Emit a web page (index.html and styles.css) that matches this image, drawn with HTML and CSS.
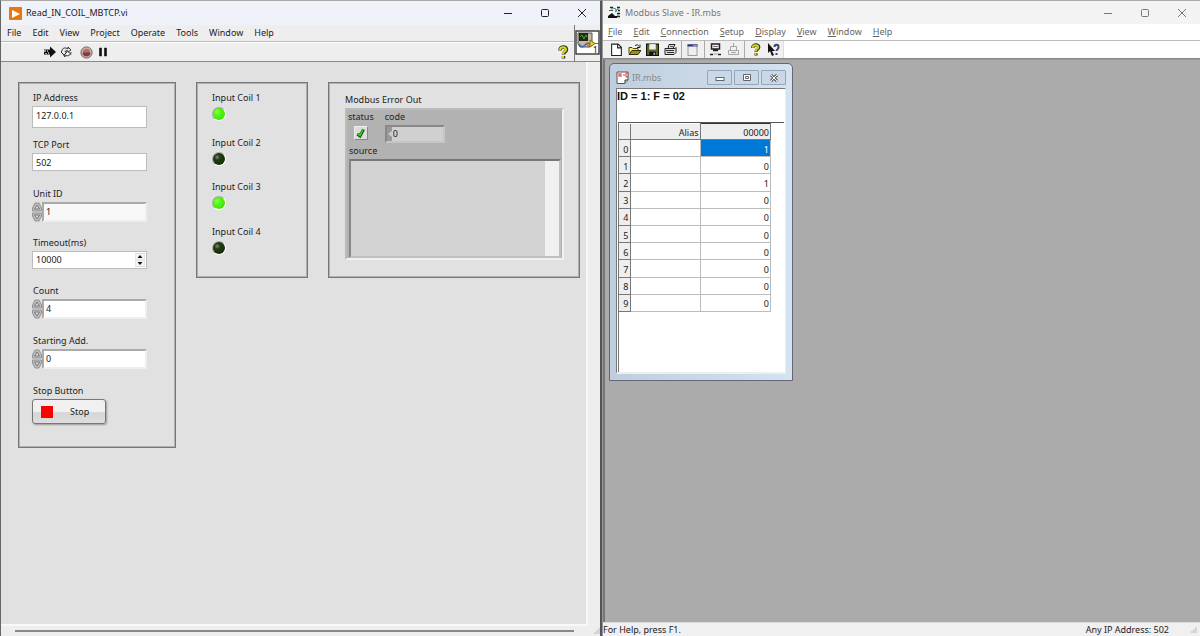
FILE: index.html
```html
<!DOCTYPE html>
<html lang="en">
<head>
<meta charset="utf-8">
<title>Read_IN_COIL_MBTCP.vi</title>
<link rel="stylesheet" href="styles.css">
</head>
<body>
<svg class="defs" aria-hidden="true">
  <symbol id="min" viewBox="0 0 10 10"><path d="M1 5.5h8" stroke="currentColor" fill="none"/></symbol>
  <symbol id="max" viewBox="0 0 10 10"><rect x="1.5" y="1.5" width="7" height="7" rx="1" stroke="currentColor" fill="none"/></symbol>
  <symbol id="close" viewBox="0 0 10 10"><path d="M1 1l8 8M9 1l-8 8" stroke="currentColor" fill="none"/></symbol>
  <symbol id="help" viewBox="0 0 12 14"><path d="M3 5.500C3 1 9.500 1 9.500 4.500C9.500 7 6.500 6.500 6.500 9.500M6.500 11v2.500" stroke="#333" stroke-width="3.500" fill="none"/><path d="M3 5C3 1.500 9 1.500 9 4.500C9 6.500 6 6.500 6 9M6 11v2" stroke="#e0db08" stroke-width="2" fill="none"/></symbol>
  <symbol id="spin" viewBox="0 0 10 20"><path d="M.5 9V6L3 1h4l2.500 5v3zM.5 11h9v3L7 19H3L.5 14z" fill="#bdbdbd" stroke="#929292"/><path d="M2.500 7L5 3l2.500 4zM2.500 13L5 17l2.500-4z" fill="#ddd" stroke="#777"/></symbol>
</svg>

<main class="desktop">
<section class="window vi">
  <header class="titlebar">
    <svg class="app-icon" viewBox="0 0 13 13"><rect width="13" height="13" rx="1" fill="#e8780c"/><path d="M3 3l8 4-8 4z" fill="#fff"/></svg>
    <h1>Read_IN_COIL_MBTCP.vi</h1>
    <div class="controls">
      <button aria-label="Minimize"><svg><use href="#min"/></svg></button>
      <button aria-label="Maximize"><svg><use href="#max"/></svg></button>
      <button aria-label="Close"><svg><use href="#close"/></svg></button>
    </div>
  </header>
  <div class="vi-bars">
    <div class="vi-rows">
      <nav class="menu">
        <a href="#">File</a><a href="#">Edit</a><a href="#">View</a><a href="#">Project</a><a href="#">Operate</a><a href="#">Tools</a><a href="#">Window</a><a href="#">Help</a>
      </nav>
      <div class="vi-tools">
        <button aria-label="Run"><svg viewBox="0 0 13 12"><path d="M1 3.500h6V.5L13 6l-6 5.500v-3H1z" fill="#111"/><path d="M1 4h2v2H1zM4 4h1v2H4zM2 7h2v1H2zM5 6h1v2H5z" fill="#999"/></svg></button>
        <button aria-label="Run continuously"><svg viewBox="0 0 13 12"><path d="M2 5C2 2 5 1 8 3V1l3 3-3 2V5C6 4 5 5 5 6H7L4 9 1 6zM11 6c0 3-3 5-6 3v2L3 8M8 5.500L11 8.500" fill="#eee" stroke="#333"/></svg></button>
        <button class="abort" aria-label="Abort"><svg viewBox="0 0 14 14"><circle cx="7" cy="7" r="6" fill="#c9c3bd" stroke="#655"/><path d="M5 3h4l2 2v4l-2 2H5L3 9V5z" fill="#c46c66"/><path d="M3 7h8v2l-2 2H5L3 9z" fill="#7d3b42"/></svg></button>
        <button aria-label="Pause"><svg viewBox="0 0 12 12"><path d="M2 2h2v8H2zM7 2h2v8H7z" fill="#111" stroke="#111" stroke-width=".6"/></svg></button>
        <button class="vi-help" aria-label="Help"><svg viewBox="0 0 12 14"><use href="#help"/></svg></button>
      </div>
    </div>
    <div class="connector">
      <svg viewBox="0 0 25 25"><rect x="1" y="1" width="23" height="23" fill="#fff" stroke="#444" stroke-width="1.500"/><path d="M3 3h14v11l-2 3H5l-2-3z" fill="#c8b8a8" stroke="#555"/><rect x="4" y="3" width="9" height="8" fill="#182a12"/><path d="M5 7l2-2 2 4 2-4 1 2" stroke="#59a52a" fill="none"/><path d="M4 14q3 5 6 1t7 1" stroke="#3c6ea8" stroke-width="1.500" fill="none"/><path d="M8 17l3-3 4 3" stroke="#d33" fill="none"/><path d="M15 10l5 3.500-5 3.500z" fill="#eddc10" stroke="#776d10"/><path d="M20 13.500h4" stroke="#d33"/><text x="18" y="23" class="icon-number">1</text></svg>
    </div>
  </div>

  <div class="front">
    <form class="panel inputs">
      <div class="field"><label for="ip">IP Address</label><input class="text tall" id="ip" value="127.0.0.1"></div>
      <div class="field"><label for="port">TCP Port</label><input class="text" id="port" value="502"></div>
      <div class="field"><label for="unit">Unit ID</label><div class="numeric"><button type="button" aria-label="Step Unit ID"><svg><use href="#spin"/></svg></button><input class="soft" id="unit" value="1"></div></div>
      <div class="field"><label for="timeout">Timeout(ms)</label><div class="stepper"><input id="timeout" value="10000"><button type="button" aria-label="Step timeout"><svg viewBox="0 0 10 14"><path d="M0 .5h10v13H0zM0 7h10" stroke="#ddd" fill="#f5f5f5"/><path d="M2.500 5L5 2l2.500 3zM2.500 9L5 12l2.500-3z" fill="#111"/></svg></button></div></div>
      <div class="field"><label for="count">Count</label><div class="numeric"><button type="button" aria-label="Step Count"><svg><use href="#spin"/></svg></button><input id="count" value="4"></div></div>
      <div class="field"><label for="start">Starting Add.</label><div class="numeric"><button type="button" aria-label="Step Starting Address"><svg><use href="#spin"/></svg></button><input id="start" value="0"></div></div>
      <div class="field"><label for="stop">Stop Button</label><button class="stop" id="stop" type="button"><span class="square"></span><span class="stop-text">Stop</span></button></div>
    </form>

    <div class="panel coils">
      <div class="coil">Input Coil 1<span class="led on"></span></div>
      <div class="coil">Input Coil 2<span class="led"></span></div>
      <div class="coil">Input Coil 3<span class="led on"></span></div>
      <div class="coil">Input Coil 4<span class="led"></span></div>
    </div>

    <div class="panel errors">
      <h2>Modbus Error Out</h2>
      <div class="cluster">
        <div class="error-top">
          <div class="status">status<span class="check"><svg viewBox="0 0 12 12"><path d="M2.500 7l2.500 2L8.500 2.500" stroke="#164b12" stroke-width="3" fill="none"/><path d="M2.500 6.500L5 8.500l3-6" stroke="#35d82a" stroke-width="1.500" fill="none"/></svg></span></div>
          <div class="code"><label for="code">code</label><div class="code-box"><svg viewBox="0 0 5 14"><path d="M5 4L1 7l4 3z" fill="#ccc"/></svg><input id="code" value="0" readonly></div></div>
        </div>
        <label class="source-label" for="source">source</label>
        <div class="source-box"><textarea id="source" readonly></textarea><div class="strip"></div></div>
      </div>
    </div>
  </div>
  <footer class="vi-foot"><div class="scroll-line"></div><svg viewBox="0 0 6 6"><path d="M5 0v6M3 2v4M1 4v2" stroke="#bbb"/></svg></footer>
</section>

<section class="window slave">
  <header class="titlebar">
    <svg class="app-icon" viewBox="0 0 13 13"><path d="M2 1.500h3M9 1.500h3M10 4.500h2M9 7.500h3M9 10.500h3" stroke="#222" stroke-width="1.500"/><path d="M1 4.500h4M8 3v3" stroke="#555"/><path d="M5 2l3 1M7 6l3-3" stroke="#3c83bd" fill="none"/><path d="M0 12v-2l4-3 3 3h2v2z" fill="#111"/><path d="M9 3h2M9 9h2M3 3h2" stroke="#36ad45"/></svg>
    <h1>Modbus Slave - IR.mbs</h1>
    <div class="controls">
      <button aria-label="Minimize"><svg><use href="#min"/></svg></button>
      <button aria-label="Maximize"><svg><use href="#max"/></svg></button>
      <button aria-label="Close"><svg><use href="#close"/></svg></button>
    </div>
  </header>
  <nav class="menu">
    <a href="#"><u>F</u>ile</a><a href="#"><u>E</u>dit</a><a href="#"><u>C</u>onnection</a><a href="#"><u>S</u>etup</a><a href="#"><u>D</u>isplay</a><a href="#"><u>V</u>iew</a><a href="#"><u>W</u>indow</a><a href="#"><u>H</u>elp</a>
  </nav>
  <div class="slave-tools">
    <div class="tool-group">
      <button aria-label="New"><svg viewBox="0 0 12 12"><path d="M1.500 1h6l3 3v7.500h-9zM7 1v3.500h3" fill="#fff" stroke="#222"/></svg></button>
      <button aria-label="Open"><svg viewBox="0 0 13 12"><path d="M1 10V4h3l1 1h5v2" fill="#f4ed70" stroke="#4c480d"/><path d="M1 11l3-4h9l-3 4z" fill="#99921b" stroke="#333006"/><path d="M7 2q3-2 4 1M12 1v3H9" stroke="#222" fill="none"/></svg></button>
      <button aria-label="Save"><svg viewBox="0 0 12 12"><path d="M.5 1h11v10.500H.5z" fill="#5b6d20" stroke="#111"/><path d="M3 1h6v5H3z" fill="#eee"/><path d="M3 8h6v4H3z" fill="#111"/><path d="M7 9h1v2H7z" fill="#eee"/></svg></button>
      <button aria-label="Print"><svg viewBox="0 0 13 12"><path d="M4 5l1-4h6L9 5M1 5h10l1-1v5l-2 2H1z" fill="#ddd" stroke="#222"/><path d="M2 7h8M3 9h7" stroke="#333"/><path d="M6 3h3" stroke="#555"/></svg></button>
    </div>
    <div class="tool-group one"><button aria-label="Definition"><svg viewBox="0 0 12 13"><rect x="1.500" y="1.500" width="9" height="11" fill="#eee" stroke="#9a9aa8"/><path d="M1 2.500h10" stroke="#2d2d7d" stroke-width="2"/><path d="M7 2.500h1M9 2.500h1" stroke="#fff"/></svg></button></div>
    <div class="tool-group two">
      <button aria-label="Connect"><svg viewBox="0 0 13 13"><path d="M2.500 1h8v5h-8zM4 7.500h5M1 11.500h3M9 11.500h3" fill="none" stroke="#222" stroke-width="1.500"/><path d="M4 3.500h5" stroke="#777"/><path d="M4.500 11h4" stroke="#999"/></svg></button>
      <button aria-label="Disconnect"><svg viewBox="0 0 13 13"><path d="M6.500 0v3M3.500 3.500h6v4h-6zM1.500 7.500h10v4h-10zM4 9.500h5" fill="none" stroke="#a5a5a5"/></svg></button>
    </div>
    <div class="tool-group last">
      <button aria-label="About"><svg viewBox="0 0 12 14"><use href="#help"/></svg></button>
      <button aria-label="Context help"><svg viewBox="0 0 13 13"><path d="M1 0v10l2-2 2 5 2-1-2-4h3z" fill="#111"/><path d="M7.500 4C7.500 1 11.500 1 11.500 4S9.500 6 9.500 8M9.500 10v2" stroke="#34466f" stroke-width="2" fill="none"/></svg></button>
    </div>
  </div>
  <div class="workspace">
    <section class="child">
      <header>
        <svg class="doc-icon" viewBox="0 0 13 13"><path d="M1 1h11v8l-3 3.500H1z" fill="#fff" stroke="#555"/><path d="M3 2v4M5 2v4M3 4h2M7 4h2M12 2h-2v4h2" stroke="#e33" fill="none"/><path d="M9 12V9h3" stroke="#333" fill="#ddd"/></svg>
        <h2>IR.mbs</h2>
        <div class="child-controls">
          <button aria-label="Minimize child"><svg viewBox="0 0 10 8"><rect x="1" y="3.500" width="8" height="3" fill="#fff" stroke="#666"/></svg></button>
          <button aria-label="Maximize child"><svg viewBox="0 0 10 8"><path d="M1.500.5h7v6h-7zM3.500 2.500h3v2h-3z" fill="#fff" stroke="#666"/></svg></button>
          <button aria-label="Close child"><svg viewBox="0 0 10 8"><path d="M2 1l6 6M8 1L2 7" stroke="#666" stroke-width="3"/><path d="M2 1l6 6M8 1L2 7" stroke="#fff"/></svg></button>
        </div>
      </header>
      <div class="document">
        <p>ID = 1: F = 02</p>
        <div class="sheet">
          <table>
            <thead><tr><th class="index"></th><th class="alias">Alias</th><th class="value">00000</th></tr></thead>
            <tbody>
              <tr><th>0</th><td></td><td class="selected">1</td></tr>
              <tr><th>1</th><td></td><td>0</td></tr>
              <tr><th>2</th><td></td><td>1</td></tr>
              <tr><th>3</th><td></td><td>0</td></tr>
              <tr><th>4</th><td></td><td>0</td></tr>
              <tr><th>5</th><td></td><td>0</td></tr>
              <tr><th>6</th><td></td><td>0</td></tr>
              <tr><th>7</th><td></td><td>0</td></tr>
              <tr><th>8</th><td></td><td>0</td></tr>
              <tr><th>9</th><td></td><td>0</td></tr>
            </tbody>
          </table>
        </div>
      </div>
    </section>
  </div>
  <footer class="statusbar"><span>For Help, press F1.</span><span class="address">Any IP Address: 502</span><svg viewBox="0 0 6 6"><path d="M5 0v6M3 2v4M1 4v2" stroke="#bbb"/></svg></footer>
</section>
</main>
</body>
</html>
```

FILE: styles.css
```css
* { box-sizing: border-box; }
body { margin: 0; font: 9px/14px "Noto Sans", "Open Sans", sans-serif; color: #222; }
button, input, textarea { font: inherit; color: inherit; margin: 0; padding: 0; border: 0; border-radius: 0; }
button { background: none; }
button svg { display: block; }
input, textarea { min-width: 0; outline: 0; }
h1, h2, p { margin: 0; font: inherit; }
a { color: inherit; text-decoration: none; }
.defs { display: none; }
.desktop { display: flex; min-height: 100vh; }
.window { display: flex; flex-direction: column; min-width: 0; border-top: 1px solid #aaa; }
.vi { flex: 601 1 0; border-left: 1px solid #666; border-right: 2px solid #555; background: #eee; }
.slave { flex: 599 1 0; background: #f0f0f0; border-left: 1px solid #999; }
.titlebar { display: flex; align-items: center; height: 24px; background: #eff2f9; padding-left: 8px; gap: 4px; }
.app-icon { width: 13px; height: 13px; }
.controls { display: flex; margin-left: auto; gap: 17px; padding-right: 8px; }
.controls button { width: 20px; height: 20px; display: grid; place-items: center; }
.controls svg { width: 10px; height: 10px; }
.menu { display: flex; align-items: center; }

.vi-bars { display: flex; border-bottom: 1px solid #888; }
.vi-rows { flex: 1; border-right: 1px solid #777; }
.vi .menu { height: 17px; padding-left: 6px; gap: 11px; border-bottom: 1px solid #bbb; }
.vi-tools { display: flex; align-items: center; height: 19px; padding: 0 5px 0 42px; gap: 4px; border-top: 1px solid #fff; }
.vi-tools svg { width: 13px; height: 12px; }
.vi-tools .abort { margin-left: 3px; }
.vi-tools .abort svg { height: 13px; }
.vi-tools .vi-help { margin-left: auto; }
.vi-tools .vi-help svg { width: 12px; height: 14px; }
.connector { padding-top: 5px; }
.connector svg { display: block; width: 25px; height: 25px; }
.icon-number { font: 8px "Noto Sans", sans-serif; }
.front { flex: 1; display: flex; align-items: flex-start; gap: 20px; padding: 20px 6px 20px 17px; margin-right: 12px; background: #e1e1e1; border-right: 2px solid #f8f8f8; border-bottom: 2px solid #f8f8f8; }
.panel { border: 1px solid #777; box-shadow: inset 0 0 0 1px #b0b0b0; }
.inputs { width: 158px; padding: 8px 28px 23px 13px; display: grid; grid-template-columns: minmax(0, 1fr); grid-template-rows: 47px 49px 49px 48px 50px 50px auto; }
.field { display: flex; flex-direction: column; align-items: stretch; gap: 1px; }
.field label { padding-left: 1px; }
.text, .stepper { width: 100%; height: 18px; border: 1px solid #bcbcbc; padding: 0 3px; background: #fff; }
.text.tall { height: 22px; padding-bottom: 4px; }
.numeric { display: flex; height: 20px; }
.numeric button, .numeric svg { width: 10px; height: 20px; }
.numeric input { flex: 1; border: 2px solid; border-color: #aaa #eee #eee #aaa; background: #fff; padding-left: 2px; }
.numeric .soft { background: #f8f8f8; }
.stepper { display: flex; padding-right: 1px; }
.stepper input { flex: 1; }
.stepper svg { width: 10px; height: 14px; }
.stop { width: 74px; height: 25px; display: flex; align-items: center; gap: 17px; padding-left: 8px; border: 1px solid #777; border-radius: 3px; background: linear-gradient(#f0f0f0 50%, #d6d6d6 55%, #ddd); box-shadow: 1px 1px 2px #999; }
.square { width: 12px; height: 12px; background: #f00; }
.coils { width: 112px; padding: 8px 0 22px 15px; display: grid; grid-template-rows: 45px 44px 45px 30px; }
.coil { display: flex; flex-direction: column; gap: 2px; }
.led { width: 14px; height: 14px; border: 1px solid; border-color: #aaa #fff #fff #aaa; border-radius: 50%; background: radial-gradient(circle at 35% 35%, #777 5%, #213e12 25%, #153009 70%); }
.led.on { background: radial-gradient(circle at 35% 35%, #8bff50 5%, #50fa0d 30%, #42de0b 80%); }
.errors { flex: 1; height: 196px; max-width: 320px; padding: 10px 15px 17px 16px; display: flex; flex-direction: column; gap: 1px; }
.cluster { flex: 1; display: flex; flex-direction: column; background: #b2b2b2; border: 2px solid; border-color: #bbb #f0f0f0 #f0f0f0 #bbb; }
.error-top { display: flex; gap: 11px; padding: 0 1px; }
.status { display: flex; flex-direction: column; gap: 2px; }
.check { width: 14px; height: 14px; margin-left: 6px; background: #ddd; border: 1px solid; border-color: #eee #888 #888 #eee; }
.check svg { display: block; width: 12px; height: 12px; }
.code { display: flex; flex-direction: column; gap: 1px; }
.code-box { display: flex; width: 60px; height: 18px; background: #d0d0d0; border: 2px solid; border-color: #888 #c6c6c6 #c6c6c6 #888; }
.code-box svg { width: 5px; height: 14px; background: #999; }
.code-box input { flex: 1; background: transparent; padding-left: 1px; }
.source-label { padding-left: 2px; line-height: 16px; }
.source-box { flex: 1; display: flex; margin: 0 1px 0 2px; border: 2px solid; border-color: #777 #c0c0c0 #c0c0c0 #888; background: #d2d2d2; }
.source-box textarea { flex: 1; resize: none; background: transparent; }
.strip { width: 14px; background: #f0f0f0; }
.vi-foot { display: flex; align-items: center; height: 10px; padding-left: 14px; }
.scroll-line { flex: 1; height: 2px; background: #888; margin-right: 20px; }
.vi-foot svg, .statusbar svg { width: 6px; height: 6px; }

.slave .titlebar { height: 23px; padding-left: 5px; background: #f3f3f3; color: #777; }
.slave .menu { height: 17px; padding-left: 5px; gap: 11px; background: #fff; color: #666; border-bottom: 1px solid #bbb; }
.slave-tools { display: flex; height: 18px; background: #fff; border-bottom: 1px solid #888; }
.tool-group { display: flex; align-items: center; gap: 5px; padding: 0 4px 0 7px; background: #f0f0f0; border-right: 1px solid #aaa; }
.tool-group svg { width: 13px; height: 13px; }
.tool-group.one { padding: 0 5px 0 4px; }
.tool-group.two { padding: 0 4px; }
.tool-group.last { padding: 0 3px 0 4px; border-right-color: #ddd; }
.workspace { flex: 1; position: relative; background: #ababab; border-left: 2px solid #777; border-top: 1px solid #999; }
.child { position: absolute; left: 4px; top: 3px; width: 184px; height: 318px; display: flex; flex-direction: column; border: 1px solid #667; border-radius: 5px 5px 0 0; background: linear-gradient(90deg, #bfcede, #d5e2ef); padding: 0 6px 6px; }
.child header { display: flex; align-items: center; height: 24px; padding-top: 3px; color: #888; gap: 3px; }
.doc-icon { width: 13px; height: 13px; }
.child-controls { display: flex; margin-left: auto; gap: 2px; }
.child-controls button { width: 25px; height: 15px; display: grid; place-items: center; border: 1px solid #94a6b9; border-radius: 1px; background: #c9d7e6; }
.child-controls svg { width: 10px; height: 8px; }
.document { flex: 1; display: flex; flex-direction: column; border: 1px solid #777; border-right-color: #eee; border-bottom: 2px solid #eee; background: #fff; }
.document p { height: 33px; font: bold 11px/14px "Liberation Sans", Arial, sans-serif; color: #111; }
.sheet { flex: 1; margin: 0 1px 0 1px; border-top: 1px solid #555; border-left: 1px solid #777; }
table { width: 152px; height: 189px; table-layout: fixed; border-collapse: collapse; line-height: 13px; }
th, td { padding: 2px 1px 0 0; text-align: right; font-weight: normal; border-right: 1px solid #bbb; border-bottom: 1px solid #bbb; }
th { background: #eee; border-color: #777; }
.index { width: 11px; }
.alias { width: 70px; }
.value { border-left: 1px solid #333; border-top: 1px solid #333; }
.selected { background: #0078d7; color: #fff; }
.statusbar { display: flex; align-items: center; height: 14px; padding-right: 3px; border-top: 1px solid #ddd; }
.address { margin-left: auto; margin-right: 22px; }
```
